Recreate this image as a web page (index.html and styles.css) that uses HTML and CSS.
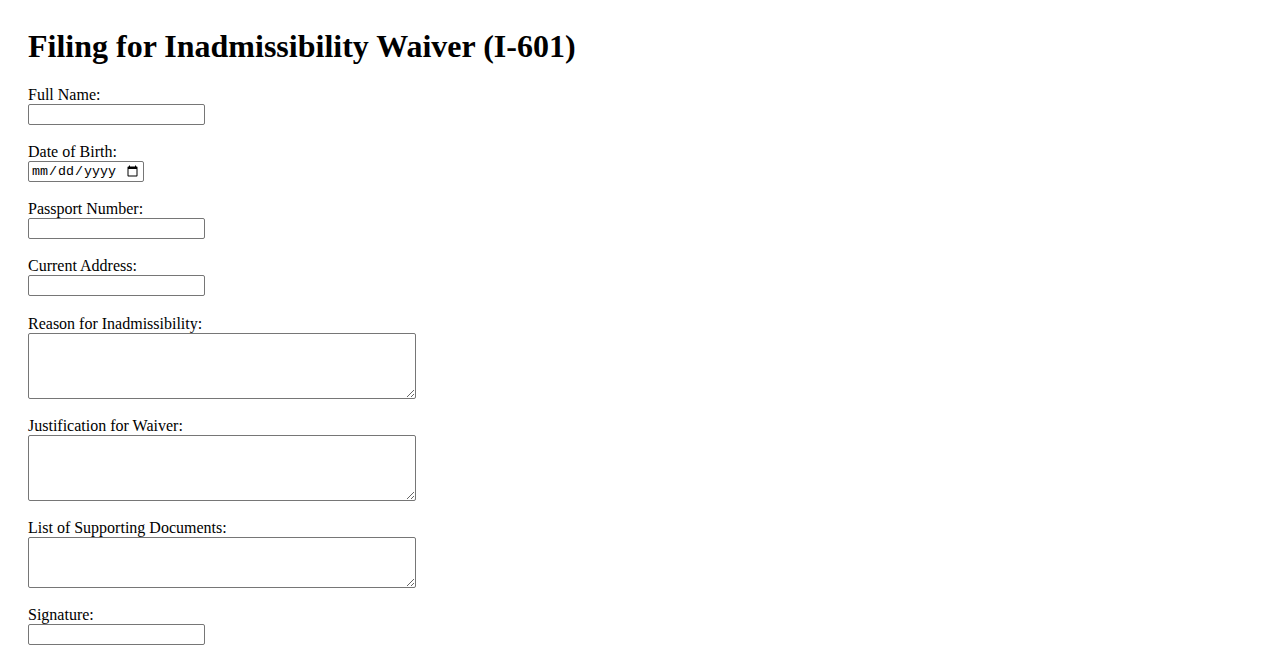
FILE: index.html
```html
<!DOCTYPE html>
<html lang="en">
<head>
<meta charset="utf-8">
<title>Filing for Inadmissibility Waiver (I-601)</title>
<link rel="stylesheet" href="styles.css">
</head>
<body>
<div class="page">
  <h1 class="title">Filing for Inadmissibility Waiver (I-601)</h1>
  <form class="form">
    <div class="field">
      <label class="label" for="fullName">Full Name:</label>
      <input class="text-input" type="text" id="fullName">
    </div>
    <div class="field">
      <label class="label" for="dob">Date of Birth:</label>
      <input class="date-input" type="date" id="dob">
    </div>
    <div class="field">
      <label class="label" for="passport">Passport Number:</label>
      <input class="text-input" type="text" id="passport">
    </div>
    <div class="field">
      <label class="label" for="address">Current Address:</label>
      <input class="text-input" type="text" id="address">
    </div>
    <div class="field">
      <label class="label" for="reason">Reason for Inadmissibility:</label>
      <textarea class="area area-tall" id="reason"></textarea>
    </div>
    <div class="field">
      <label class="label" for="justification">Justification for Waiver:</label>
      <textarea class="area area-tall" id="justification"></textarea>
    </div>
    <div class="field">
      <label class="label" for="docs">List of Supporting Documents:</label>
      <textarea class="area area-short" id="docs"></textarea>
    </div>
    <div class="field">
      <label class="label" for="signature">Signature:</label>
      <input class="text-input" type="text" id="signature">
    </div>
  </form>
</div>
</body>
</html>
```

FILE: styles.css
```css
html, body {
  margin: 0;
  background: #ffffff;
}

body {
  font-family: "Liberation Serif", "Times New Roman", serif;
  font-size: 16px;
  color: #000000;
}

.page {
  padding: 28px;
}

.title {
  margin: 0 0 21px;
  font-size: 32px;
  font-weight: bold;
  line-height: 37px;
}

.form {
  display: flex;
  flex-direction: column;
  gap: 18.15px;
}

.field {
  display: flex;
  flex-direction: column;
  align-items: flex-start;
}

.label {
  line-height: 18px;
}

.text-input,
.date-input,
.area {
  box-sizing: border-box;
  margin: 0;
  border: 1px solid #767676;
  border-radius: 2px;
  background: #ffffff;
}

.text-input {
  width: 177px;
  height: 21px;
  padding: 1px 2px;
  font-family: "Liberation Sans", Arial, sans-serif;
  font-size: 13.333px;
}

.date-input {
  width: 116px;
  height: 21px;
  padding: 1px 2px;
  font-family: "Liberation Mono", "Courier New", monospace;
  font-size: 13.333px;
}

.area {
  width: 388px;
  padding: 2px;
  font-family: "Liberation Mono", "Courier New", monospace;
  font-size: 13.333px;
}

.area-tall {
  height: 66px;
}

.area-short {
  height: 51px;
}
```
